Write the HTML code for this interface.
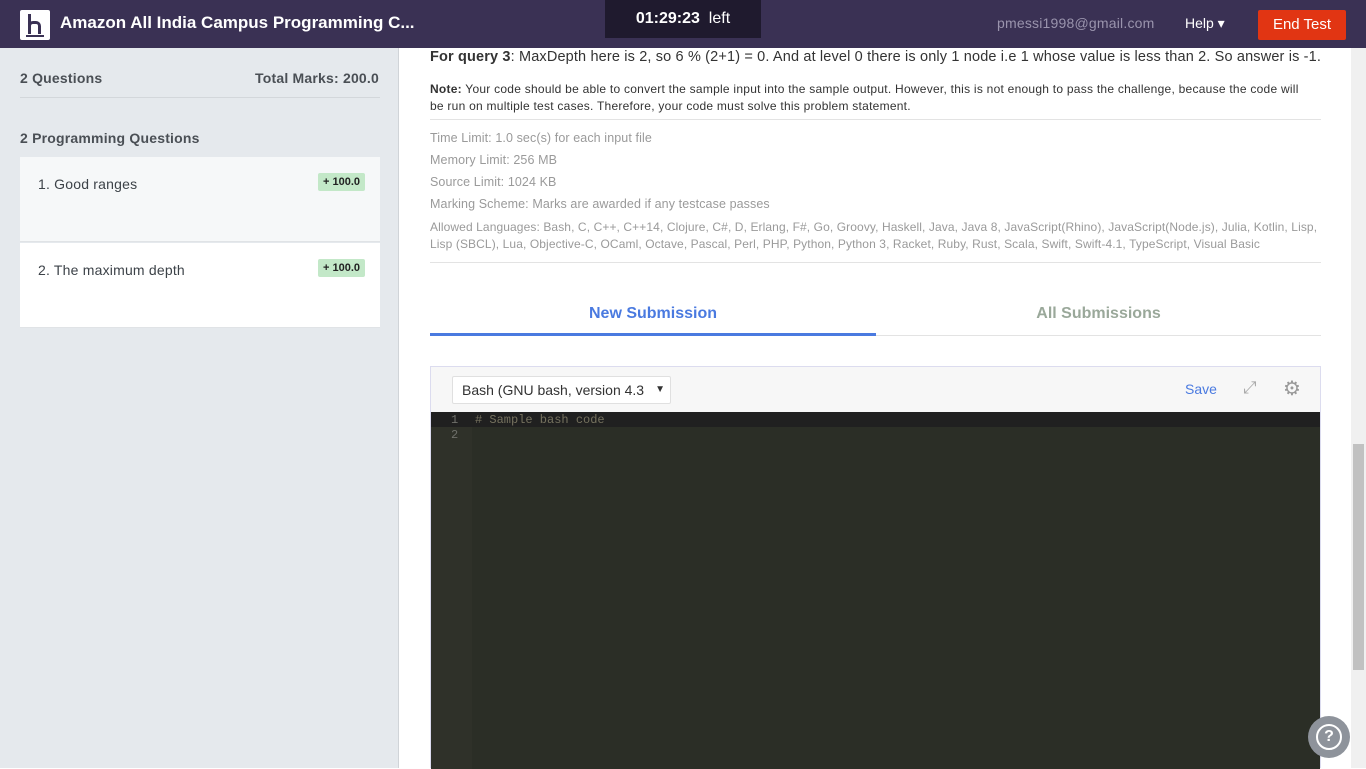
<!DOCTYPE html>
<html><head><style>
*{box-sizing:border-box;margin:0;padding:0}
body{width:1366px;height:768px;overflow:hidden;font-family:"Liberation Sans",sans-serif;background:#fff;position:relative}
.top{position:absolute;left:0;top:0;width:1366px;height:48px;background:#3a3154}
.logo{position:absolute;left:20px;top:10px;width:30px;height:30px;background:#fff;border-radius:2px}
.title{position:absolute;left:60px;top:13px;color:#fff;font-weight:bold;font-size:17px}
.timer{position:absolute;left:605px;top:0;width:156px;height:38px;background:#1f1a2e;color:#fff;font-size:16px;text-align:center;line-height:37px}
.email{position:absolute;left:997px;top:15px;color:#9a94ad;font-size:14px;letter-spacing:.2px}
.help{position:absolute;left:1185px;top:15px;color:#fff;font-size:14px}
.end{position:absolute;left:1258px;top:10px;width:88px;height:30px;background:#e13513;color:#fff;font-size:15px;text-align:center;line-height:30px;border-radius:2px}
.side{position:absolute;left:0;top:48px;width:399px;height:720px;background:#e5e9ed;border-right:1px solid #d0d4d8}
.sh{position:absolute;font-weight:bold;font-size:14px;color:#4a4f55;letter-spacing:.2px}
.q{position:absolute;left:20px;width:360px;height:85px;background:#f6f8f9;border-bottom:1px solid #e0e3e6}
.q span{position:absolute;left:18px;top:19px;font-size:14px;color:#3c4248;letter-spacing:.2px}
.q b{position:absolute;right:15px;top:16px;background:#c3e8c8;font-size:11px;padding:3px 5px;border-radius:2px;color:#222}
.gray{color:#9a9a9a;font-size:12.5px;position:absolute;left:430px;letter-spacing:.1px}
.code{position:absolute;left:430px;top:366px;width:891px;height:402px;border:1px solid #dcdcef;border-bottom:none}
</style></head><body>
<div class="top">
<div class="logo"><div style="position:absolute;left:8px;top:4px;width:3px;height:20px;background:#3a3154"></div><div style="position:absolute;left:8px;top:11px;width:13px;height:13px;border:3px solid #3a3154;border-bottom:none;border-radius:5px 5px 0 0"></div><div style="position:absolute;left:6px;top:25px;width:18px;height:2px;background:#3a3154"></div></div>
<div class="title">Amazon All India Campus Programming C...</div>
<div class="timer"><b>01:29:23</b>&nbsp; left</div>
<div class="email">pmessi1998@gmail.com</div>
<div class="help">Help ▾</div>
<div class="end">End Test</div>
</div>
<div class="side">
<div class="sh" style="left:20px;top:22px">2 Questions</div>
<div class="sh" style="right:19px;top:22px">Total Marks: 200.0</div>
<div style="position:absolute;left:20px;top:49px;width:360px;height:1px;background:#d3d7db"></div>
<div class="sh" style="left:20px;top:82px">2 Programming Questions</div>
<div class="q" style="top:109px"><span>1. Good ranges</span><b>+ 100.0</b></div>
<div class="q" style="top:195px;background:#fff"><span>2. The maximum depth</span><b>+ 100.0</b></div>
</div>
<div style="position:absolute;left:430px;top:49px;font-size:14.5px;color:#333;letter-spacing:.15px"><b>For query 3</b>: MaxDepth here is 2, so 6 % (2+1) = 0. And at level 0 there is only 1 node i.e 1 whose value is less than 2. So answer is -1.</div>
<div style="position:absolute;left:430px;top:81px;width:880px;font-size:12px;line-height:17px;color:#333;letter-spacing:.25px"><b>Note:</b> Your code should be able to convert the sample input into the sample output. However, this is not enough to pass the challenge, because the code will be run on multiple test cases. Therefore, your code must solve this problem statement.</div>
<div style="position:absolute;left:430px;top:119px;width:891px;height:1px;background:#e3e3e3"></div>
<div class="gray" style="top:131px">Time Limit: 1.0 sec(s) for each input file</div>
<div class="gray" style="top:153px">Memory Limit: 256 MB</div>
<div class="gray" style="top:175px">Source Limit: 1024 KB</div>
<div class="gray" style="top:197px">Marking Scheme: Marks are awarded if any testcase passes</div>
<div class="gray" style="top:219px;width:891px;line-height:17px;font-size:12px">Allowed Languages: Bash, C, C++, C++14, Clojure, C#, D, Erlang, F#, Go, Groovy, Haskell, Java, Java 8, JavaScript(Rhino), JavaScript(Node.js), Julia, Kotlin, Lisp, Lisp (SBCL), Lua, Objective-C, OCaml, Octave, Pascal, Perl, PHP, Python, Python 3, Racket, Ruby, Rust, Scala, Swift, Swift-4.1, TypeScript, Visual Basic</div>
<div style="position:absolute;left:430px;top:262px;width:891px;height:1px;background:#e3e3e3"></div>
<div style="position:absolute;left:430px;top:305px;width:446px;text-align:center;color:#4a7ae0;font-size:16px;font-weight:bold">New Submission</div>
<div style="position:absolute;left:876px;top:305px;width:445px;text-align:center;color:#9aa89a;font-size:16px;font-weight:bold">All Submissions</div>
<div style="position:absolute;left:430px;top:335px;width:891px;height:1px;background:#e3e3e3"></div>
<div style="position:absolute;left:430px;top:333px;width:446px;height:3px;background:#4a7ae0"></div>
<div class="code">
<div style="height:45px;background:#f7f7f7;position:relative">
<div style="position:absolute;left:21px;top:9px;width:219px;height:28px;background:#fff;border:1px solid #e0e0e0;border-radius:2px;font-size:14px;color:#333;line-height:26px;padding-left:9px">Bash (GNU bash, version 4.3 <span style="font-size:10px;position:absolute;right:5px">▼</span></div>
<div style="position:absolute;left:754px;top:14px;color:#4a7ae0;font-size:14px">Save</div>
<div style="position:absolute;left:812px;top:11px;color:#aaa;font-size:17px">⤢</div>
<div style="position:absolute;left:852px;top:9px;color:#999;font-size:20px">⚙</div>
</div>
<div style="height:357px;background:#2b2e26;position:relative;font-family:'Liberation Mono',monospace;font-size:12px">
<div style="position:absolute;left:0;top:0;width:41px;height:100%;background:#2f3129"></div>
<div style="position:absolute;left:0;top:0;width:889px;height:15px;background:#202020"></div>
<div style="position:absolute;left:20px;top:1px;color:#6f706a">1</div>
<div style="position:absolute;left:20px;top:16px;color:#6f706a">2</div>
<div style="position:absolute;left:44px;top:1px;color:#75715e"># Sample bash code</div>
</div>
</div>
<div style="position:absolute;left:1351px;top:48px;width:15px;height:720px;background:#f0f0f0"></div>
<div style="position:absolute;left:1353px;top:444px;width:11px;height:226px;background:#c1c1c1"></div>
<div style="position:absolute;left:1308px;top:716px;width:42px;height:42px;border-radius:50%;background:#8e939b"><div style="position:absolute;left:8px;top:8px;width:26px;height:26px;border:2px solid #fff;border-radius:50%;color:#fff;font-weight:bold;font-size:16px;text-align:center;line-height:22px">?</div></div>
</body></html>
